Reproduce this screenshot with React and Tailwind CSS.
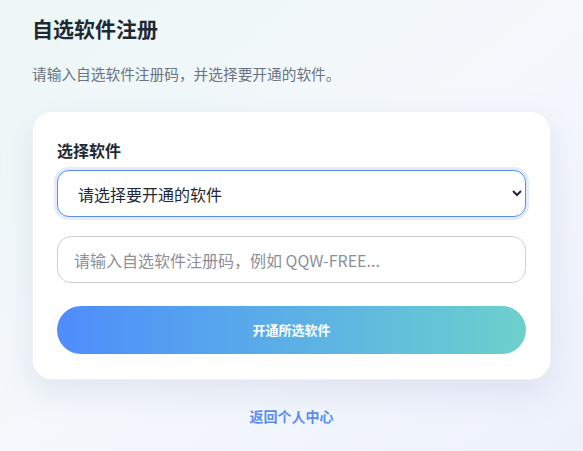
import React from "react";

export default function App() {
  return (
    <div
      className="min-h-screen bg-gradient-to-br from-[#ecf7f6] via-[#f5f8fc] to-[#edf1fc] px-8 pt-[13px] pb-6"
      style={{ fontFamily: '"Noto Sans CJK SC", "Noto Sans", sans-serif' }}
    >
      {/* HEADER */}
      <h1 className="text-[21px] leading-[30px] font-bold text-[#1f2933]">自选软件注册</h1>

      <p className="mt-[21px] text-[14.7px] leading-[20px] text-[#6b7280]">
        请输入自选软件注册码，并选择要开通的软件。
      </p>

      {/* CARD */}
      <div className="mt-[27px] bg-white rounded-[20px] px-6 pt-[26px] pb-[25px] border border-[#eef1f6] shadow-[0_12px_32px_rgba(148,163,196,0.22)]">
        <label className="block text-[16px] leading-[24px] font-semibold text-[#1f2933]">选择软件</label>

        <select className="mt-2 w-full h-[47px] pl-4 pr-2.5 rounded-xl border border-[#5b8def] bg-white text-[16px] text-[#1f2933] outline-none ring-[3px] ring-[#e3ecfd]">
          <option>请选择要开通的软件</option>
        </select>

        <input
          className="mt-[19px] w-full h-[47px] px-4 rounded-[14px] border border-[#cdd2d9] bg-white text-[16px] text-[#1f2933] placeholder:text-[#8b9099] outline-none"
          placeholder="请输入自选软件注册码，例如 QQW-FREE..."
        />

        <button className="mt-[23px] w-full h-12 rounded-full bg-gradient-to-r from-[#4f8cfb] to-[#6dd0cc] text-white text-[13px] font-bold">
          开通所选软件
        </button>
      </div>

      {/* FOOTER LINK */}
      <div className="mt-[23px] text-center">
        <a className="text-[14px] font-bold text-[#5b8def]">返回个人中心</a>
      </div>
    </div>
  );
}
